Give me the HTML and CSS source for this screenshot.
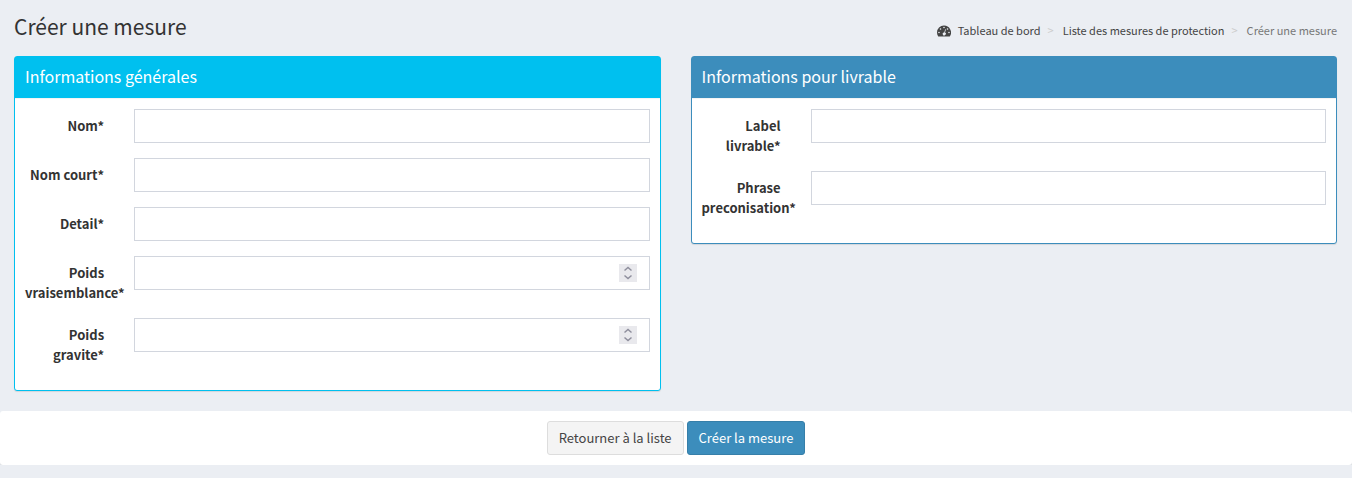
FILE: index.html
```
<!DOCTYPE html>
<html lang="fr">
<head>
<meta charset="utf-8">
<title>Créer une mesure</title>
<link rel="stylesheet" href="styles.css">
</head>
<body>
<header class="content-header">
  <h1 class="page-title">Créer une mesure</h1>
  <nav aria-label="Fil d'Ariane">
    <ol class="breadcrumb">
      <li><a href="#"><svg class="dash-icon" viewBox="0 0 14 12" aria-hidden="true"><path fill="currentColor" fill-rule="evenodd" d="M7 .5a7 7 0 0 0-7 7c0 1.400.4 2.700 1.100 3.800.1.150.25.2.4.2h11c.15 0 .3-.05.4-.2A7 7 0 0 0 7 .5zM2 6.700a.8.8 0 1 1 0 1.600.8.8 0 0 1 0-1.600zM3.500 3.200a.8.8 0 1 1 0 1.600.8.8 0 0 1 0-1.600zM7 1.700a.8.8 0 1 1 0 1.600.8.8 0 0 1 0-1.600zM10.500 3.200a.8.8 0 1 1 0 1.600.8.8 0 0 1 0-1.600zM12 6.700a.8.8 0 1 1 0 1.600.8.8 0 0 1 0-1.600zM8.200 4.200l.7.2-.9 3.200a1.500 1.500 0 1 1-.7-.2z"/></svg>Tableau de bord</a></li>
      <li><a href="#">Liste des mesures de protection</a></li>
      <li class="current" aria-current="page">Créer une mesure</li>
    </ol>
  </nav>
</header>
<form>
  <div class="columns">
    <section class="box box-info">
      <h2 class="box-header">Informations générales</h2>
      <div class="box-body">
        <div class="form-group"><label for="nom">Nom*</label><input class="control" id="nom" type="text"></div>
        <div class="form-group"><label for="court">Nom court*</label><input class="control" id="court" type="text"></div>
        <div class="form-group"><label for="detail">Detail*</label><input class="control" id="detail" type="text"></div>
        <div class="form-group"><label for="vraisemblance">Poids vraisemblance*</label>
          <div class="number"><input class="control" id="vraisemblance" type="number"><svg class="spinner" viewBox="0 0 18 18" aria-hidden="true"><path d="M5.500 6.500 9 3.500l3.500 3M5.500 11.500l3.500 3 3.500-3"/></svg></div></div>
        <div class="form-group"><label for="gravite">Poids gravite*</label>
          <div class="number"><input class="control" id="gravite" type="number"><svg class="spinner" viewBox="0 0 18 18" aria-hidden="true"><path d="M5.500 6.500 9 3.500l3.500 3M5.500 11.500l3.500 3 3.500-3"/></svg></div></div>
      </div>
    </section>
    <section class="box box-primary">
      <h2 class="box-header">Informations pour livrable</h2>
      <div class="box-body">
        <div class="form-group"><label for="label">Label livrable*</label><input class="control" id="label" type="text"></div>
        <div class="form-group"><label for="phrase">Phrase preconisation*</label><input class="control" id="phrase" type="text"></div>
      </div>
    </section>
  </div>
  <div class="actions">
    <button class="btn btn-default" type="button">Retourner à la liste</button>
    <button class="btn btn-primary" type="submit">Créer la mesure</button>
  </div>
</form>
</body>
</html>
```
FILE: styles.css
```
* { box-sizing: border-box; }

body {
  margin: 0;
  background: #ebeef3;
  color: #333;
  font-family: "Source Sans Pro", "Noto Sans CJK SC", sans-serif;
  font-size: 13px;
  line-height: 20px;
}

.content-header {
  display: flex;
  align-items: center;
  justify-content: space-between;
  padding: 14px 15px 18px 14px;
}

.page-title {
  margin: 0;
  font-size: 21px;
  font-weight: 400;
  line-height: 24px;
}

.breadcrumb {
  display: flex;
  margin: 0;
  padding: 8px 0 0;
  list-style: none;
  font-size: 11px;
  line-height: 16px;
}

.breadcrumb li + li::before {
  content: ">";
  padding: 0 9px 0 7px;
  color: #ccc;
}

.breadcrumb a {
  color: #444;
  text-decoration: none;
}

.breadcrumb .current { color: #777; }

.dash-icon {
  width: 14px;
  height: 12px;
  margin-right: 7px;
  vertical-align: -2px;
}

.columns {
  display: grid;
  grid-template-columns: 1fr 1fr;
  gap: 30px;
  align-items: start;
  padding: 0 15px 20px 14px;
}

.box {
  border: 1px solid;
  border-radius: 3px;
  background: #fff;
  box-shadow: 0 1px 1px rgba(0, 0, 0, 0.1);
}

.box-info { border-color: #00c0ef; }
.box-primary { border-color: #3c8dbc; }
.box-info .box-header { background-color: #00c0ef; }
.box-primary .box-header { background-color: #3c8dbc; }

.box-header {
  margin: 0;
  padding: 9px 10px 11px;
  border-bottom: 1px solid #f4f4f4;
  color: #fff;
  font-size: 16px;
  font-weight: 400;
  line-height: 21px;
}

.box-body { padding: 10px; }

.form-group {
  display: grid;
  grid-template-columns: calc((100% + 30px) / 6 - 30px) 1fr;
  column-gap: 30px;
  align-items: start;
  margin-bottom: 15px;
}

.form-group label {
  padding-top: 7px;
  font-weight: 700;
  text-align: right;
}

.control {
  display: block;
  width: 100%;
  height: 34px;
  padding: 6px 12px;
  border: 1px solid #d2d6de;
  border-radius: 0;
  background: #fff;
  font: inherit;
}

.number { position: relative; }

.number .control { appearance: textfield; }

.spinner {
  position: absolute;
  top: 8px;
  right: 13px;
  width: 18px;
  height: 18px;
  background: #e9e9ed;
  fill: none;
  stroke: #8f8f9d;
  stroke-width: 1.5;
  pointer-events: none;
}

.actions {
  display: flex;
  justify-content: center;
  gap: 3px;
  padding: 10px;
  border-radius: 3px;
  background: #fff;
  box-shadow: 0 1px 1px rgba(0, 0, 0, 0.1);
}

.btn {
  padding: 6px 11px;
  border: 1px solid;
  border-radius: 3px;
  font: inherit;
}

.btn-default {
  border-color: #ddd;
  background: #f4f4f4;
  color: #444;
}

.btn-primary {
  border-color: #367fa9;
  background: #3c8dbc;
  color: #fff;
}
```
